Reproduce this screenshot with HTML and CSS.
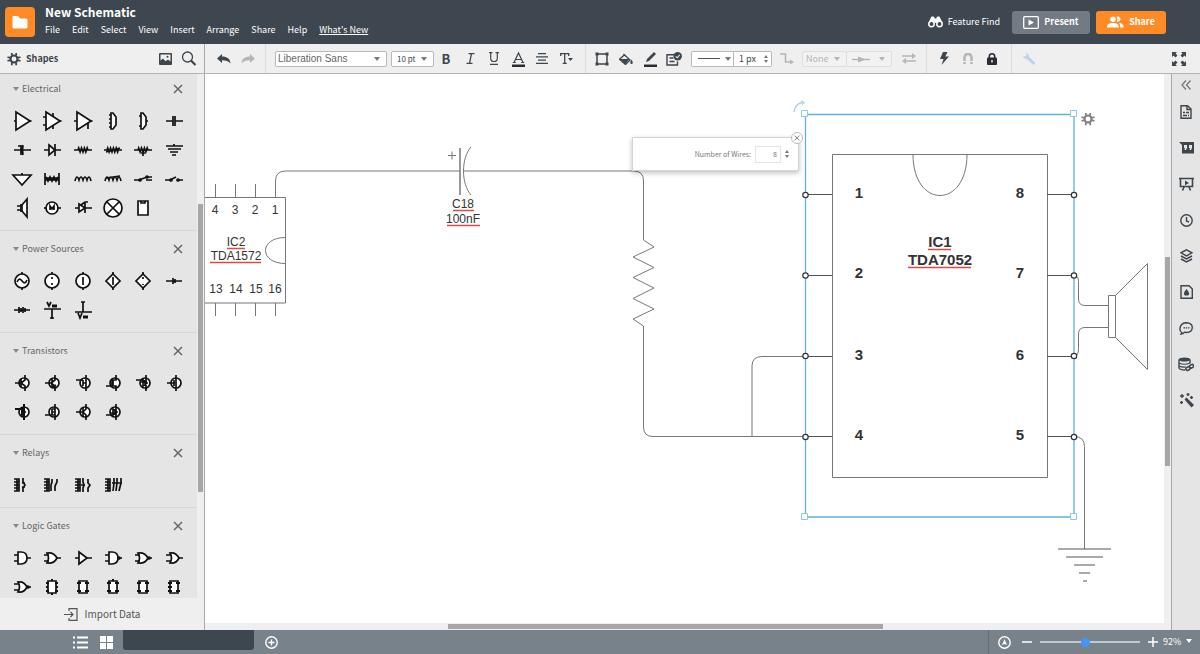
FILE: index.html
```html
<!DOCTYPE html>
<html lang="en">
<head>
    <meta charset="UTF-8">
    <meta name="viewport" content="width=device-width, initial-scale=1.0">
    <title>New Schematic</title>
    <link rel="stylesheet" href="styles.css">
</head>
<body>
    <!-- shared icons -->
    <svg class="defs" aria-hidden="true">
        <symbol id="gear" viewBox="-8 -8 16 16">
            <circle r="4" fill="none" stroke="currentColor" stroke-width="2.400"/>
            <path d="M-2.500-4V-7M2.500-4V-7M-2.500 4V7M2.500 4V7M-4-1.500-7.500-2M-4 1.500-7.500 2M4-1.500 7.500-2M4 1.500 7.500 2" fill="none" stroke="currentColor" stroke-width="2"/>
        </symbol>
        <symbol id="close" viewBox="0 0 10 10"><path d="M1 1l8 8M9 1L1 9" fill="none" stroke="currentColor" stroke-width="1.500"/></symbol>
    </svg>

    <header class="header">
        <button class="home-btn" aria-label="Documents">
            <svg width="16" height="13" viewBox="0 0 16 13"><path d="M1 0h5l2 2.500h6a1.500 1.500 0 0 1 1.500 1.500v7a1.500 1.500 0 0 1-1.500 1.500H2A1.500 1.500 0 0 1 .5 11V1z" fill="#fff"/></svg>
        </button>
        <div class="doc">
            <h1 class="doc-title">New Schematic</h1>
            <nav class="menu">
                <a href="#">File</a>
                <a href="#">Edit</a>
                <a href="#">Select</a>
                <a href="#">View</a>
                <a href="#">Insert</a>
                <a href="#">Arrange</a>
                <a href="#">Share</a>
                <a href="#">Help</a>
                <a href="#" class="whats-new">What's New</a>
            </nav>
        </div>
        <button class="find-btn">
            <svg width="15" height="12" viewBox="0 0 15 12"><path d="M3 1.500C3 .3 6 .3 6.500 1.500v1h2v-1C9 .3 12 .3 12 1.500l2.500 5.200H.5z" fill="#fff"/><g fill="#3e474f" stroke="#fff" stroke-width="1.500"><circle cx="3.500" cy="8" r="2.700"/><circle cx="11.500" cy="8" r="2.700"/></g></svg>
            Feature Find
        </button>
        <button class="top-btn present">
            <svg width="16" height="13" viewBox="0 0 16 13"><rect x=".7" y=".7" width="14.600" height="11.600" rx="1" fill="none" stroke="#fff" stroke-width="1.300"/><path d="M5.500 3.500l5.500 3-5.500 3z" fill="#fff"/></svg>
            Present
        </button>
        <button class="top-btn share">
            <svg width="17" height="12" viewBox="0 0 17 12" fill="#fff"><circle cx="6" cy="3.200" r="2.700"/><path d="M0 11.500C0 8 2.500 7 6 7s6 1 6 4.500zM9.500.9a2.600 2.600 0 1 1 0 4.500 4 4 0 0 0 0-4.500zM12 7.100c3 .2 4.600 1.500 4.600 4.400h-3.400c0-2-.3-3.400-1.200-4.400z"/></svg>
            Share
        </button>
    </header>

    <div class="toolbar">
        <div class="shapes-head">
            <button class="shapes-btn"><svg width="14" height="14"><use href="#gear"/></svg>Shapes</button>
            <button class="tool tool-image" aria-label="Images"><svg width="13" height="12" viewBox="0 0 13 12"><path d="M1 0h11q1 0 1 1v10q0 1-1 1H1q-1 0-1-1V1q0-1 1-1zM1.500 1.500v6L4 5.500l2.500 2.800L9 6.500l2.500 2v-7z" fill="currentColor" fill-rule="evenodd"/><circle cx="8.500" cy="3.700" r="1" fill="currentColor"/></svg></button>
            <button class="tool" aria-label="Search shapes"><svg width="16" height="15" viewBox="0 0 16 15" fill="none" stroke="currentColor"><circle cx="6.500" cy="6" r="5" stroke-width="1.300"/><path d="M10 9.500l4.500 4.500" stroke-width="2.200"/></svg></button>
        </div>
        <div class="group group-history">
            <button class="tool" aria-label="Undo"><svg width="14" height="10" viewBox="0 0 14 10"><path d="M5 0v2.500c5 0 8 2 8.500 7C11.500 7 9 6.300 5 6.300V9L0 4.500z" fill="currentColor"/></svg></button>
            <button class="tool off" aria-label="Redo" disabled><svg width="14" height="10" viewBox="0 0 14 10"><path d="M9 0v2.500c-5 0-8 2-8.500 7C2.500 7 5 6.300 9 6.300V9l5-4.500z" fill="currentColor"/></svg></button>
        </div>
        <div class="group group-text">
            <div class="field font-field"><select aria-label="Font"><option>Liberation Sans</option></select></div>
            <div class="field size-field"><select aria-label="Font size"><option>10 pt</option></select></div>
            <div class="tools">
                <button class="tool glyph bold" aria-label="Bold">B</button>
                <button class="tool" aria-label="Italic"><svg width="9" height="11" viewBox="0 0 9 11"><path d="M2.500.7h6M.5 10.300h6M5.500.7l-2 9.600" fill="none" stroke="currentColor" stroke-width="1.300"/></svg></button>
                <button class="tool" aria-label="Underline"><svg width="10" height="13" viewBox="0 0 10 13"><path d="M0 .7h3.500M6.500.7H10M1.700.7v5.500q0 3.300 3.300 3.300t3.300-3.300V.7M1 12.300h8" fill="none" stroke="currentColor" stroke-width="1.200"/></svg></button>
                <button class="tool" aria-label="Text color"><svg width="13" height="16" viewBox="0 0 13 16"><path d="M2 11.500L6.500 2 11 11.500M3.700 8.500h5.600M.8 11.500h3M9.200 11.500h3" fill="none" stroke="currentColor" stroke-width="1.200"/><path d="M0 13.500h13V16H0z" fill="#282c33"/></svg></button>
                <button class="tool" aria-label="Align text"><svg width="12" height="11" viewBox="0 0 12 11"><path d="M2 .7h8M0 3.900h12M2 7.100h8M0 10.300h12" stroke="currentColor" stroke-width="1.200"/></svg></button>
                <button class="tool" aria-label="Text options"><svg width="13" height="11" viewBox="0 0 13 11"><path d="M.7 3V.7h8V3M4.700.7v9.600M2.700 10.300h4" fill="none" stroke="currentColor" stroke-width="1.300"/><path d="M8 5h5l-2.500 3z" fill="currentColor"/></svg></button>
            </div>
        </div>
        <div class="group group-shape">
            <div class="tools">
                <button class="tool" aria-label="Shape"><svg width="14" height="14" viewBox="0 0 14 14"><path d="M2 2h10v10H2z" fill="none" stroke="currentColor" stroke-width="1.500"/><path d="M.5.5h3v3h-3zM10.500.5h3v3h-3zM.5 10.500h3v3h-3zM10.500 10.500h3v3h-3z" fill="currentColor"/></svg></button>
                <button class="tool" aria-label="Fill"><svg width="14" height="12" viewBox="0 0 14 12"><path d="M4.500 1l6.500 6-4.500 4.500L.5 6.200l4.500-4" fill="none" stroke="currentColor" stroke-width="1.300"/><path d="M1 6h9.500l-4 5z" fill="currentColor"/><path d="M12.500 6.500q2.500 4 0 4.500-2.500-.5 0-4.500z" fill="currentColor"/></svg></button>
                <button class="tool" aria-label="Line color"><svg width="13" height="16" viewBox="0 0 13 16"><path d="M2 11l1-3 7-7 2 2-7 7z" fill="currentColor"/><path d="M0 13.500h13V16H0z" fill="#282c33"/></svg></button>
                <button class="tool" aria-label="Theme"><svg width="16" height="14" viewBox="0 0 16 14"><path d="M9 2.700H1v10.300h10.500V9.500M3.500 6h4M3.500 9.500h5" fill="none" stroke="currentColor" stroke-width="1.400"/><circle cx="11.700" cy="4.300" r="4.200" fill="currentColor"/><path d="M9.700 4.300l1.500 1.500 2.500-3" fill="none" stroke="#efefef" stroke-width="1.100"/></svg></button>
            </div>
            <div class="field line-field"><select aria-label="Line style"><option></option></select></div>
            <div class="field px-field"><input type="text" value="1 px" aria-label="Line width"><span class="spin"></span></div>
            <button class="tool off elbow" aria-label="Line shape" disabled><svg width="14" height="12" viewBox="0 0 14 12"><path d="M0 1h5.500v8H11" fill="none" stroke="currentColor" stroke-width="1.500"/><path d="M10 6.500l4 2.500-4 2.500z" fill="currentColor"/></svg></button>
            <div class="field off none-field"><select aria-label="Line start" disabled><option>None</option></select></div>
            <div class="field off arrow-field"><select aria-label="Line end" disabled><option></option></select><svg width="18" height="7" viewBox="0 0 18 7"><path d="M0 3.500h18" stroke="currentColor" stroke-width="1.400"/><path d="M6 .5l8 3-8 3z" fill="currentColor"/></svg></div>
            <button class="tool off swap" aria-label="Swap ends" disabled><svg width="14" height="11" viewBox="0 0 14 11"><path d="M0 3h11M3 8h11" stroke="currentColor" stroke-width="1.400"/><path d="M10 0l4 3-4 3zM4 5v6L0 8z" fill="currentColor"/></svg></button>
        </div>
        <div class="group group-action">
            <button class="tool" aria-label="Actions"><svg width="10" height="13" viewBox="0 0 10 13"><path d="M4 0h4.500L6.300 4.500H10L2.500 13l2-6H1z" fill="currentColor"/></svg></button>
            <button class="tool off" aria-label="Snap" disabled><svg width="10" height="11" viewBox="0 0 10 11"><path d="M1.500 11V5q0-4 3.500-4t3.500 4v6" fill="none" stroke="currentColor" stroke-width="2.500"/><path d="M0 8.500h10" stroke="#efefef"/></svg></button>
            <button class="tool" aria-label="Lock"><svg width="10" height="12" viewBox="0 0 10 12"><path d="M2.300 5V3.500q0-2.700 2.700-2.700t2.700 2.700V5" fill="none" stroke="#282c33" stroke-width="1.600"/><rect y="4.500" width="10" height="7.500" rx="1" fill="#282c33"/><path d="M5 7v2.500" stroke="#efefef" stroke-width="1.400"/></svg></button>
        </div>
        <div class="group group-last">
            <button class="tool wrench" aria-label="Manage" disabled><svg width="14" height="14" viewBox="0 0 14 14"><path d="M3.500 1Q7 1.500 7 5l6.500 6-2 2L5 7Q1.500 7 1 3.500l2.500 1.300 1.200-1.200z" fill="currentColor"/></svg></button>
            <button class="tool fullscreen" aria-label="Full screen"><svg width="14" height="14" viewBox="0 0 14 14"><path d="M0 0h5L3.500 1.500l2 2-2 2-2-2L0 5zM14 0v5l-1.500-1.500-2 2-2-2 2-2L9 0zM0 14V9l1.500 1.500 2-2 2 2-2 2L5 14zM14 14H9l1.500-1.500-2-2 2-2 2 2L14 9z" fill="currentColor"/></svg></button>
        </div>
    </div>

    <div class="main">
        <aside class="sidebar">
            <div class="library">
                <div class="sections">
                    <section class="section">
                        <div class="section-head"><h2>Electrical</h2><button class="close" aria-label="Close Electrical"><svg width="10" height="10"><use href="#close"/></svg></button></div>
                        <div class="shapes">
                            <svg viewBox="-14 -14 28 28"><path class="w" d="M-6-9L8 0-6 9z"/><path d="M-8 0h2M8 0h1.500"/></svg>
                            <svg viewBox="-14 -14 28 28"><path class="w" d="M-6-9L8 0-6 9z"/><path d="M-9-4h3M-9 4h3M8 0h1.500M1-8v4M1 8V4"/></svg>
                            <svg viewBox="-14 -14 28 28"><path class="w" d="M-6-9L8 0-6 9z"/><path d="M-9 0h3M8 0h1.500M5 2v6"/></svg>
                            <svg viewBox="-14 -14 28 28"><path class="w" d="M-2-8h2l3 4v8L0 8h-2z"/><path d="M-4-6h2M-4-2h2M-4 2h2M-4 6h2"/></svg>
                            <svg viewBox="-14 -14 28 28"><path class="w" d="M-2-8h2l3 4v8L0 8h-2z"/><path d="M-4-5h2M-4 5h2M3 0h2"/></svg>
                            <svg viewBox="-14 -14 28 28"><path d="M-8 0h7M1 0h8M-1-5V5M1-5V5"/></svg>
                            <svg viewBox="-14 -14 28 28"><path d="M-8 0h7M1 0h8M-1-5V5M1-5q-1 5 0 10M-4-4h3"/></svg>
                            <svg viewBox="-14 -14 28 28"><path d="M-8 0H9M3-6V6"/><path class="w" d="M-3-5L3 0-3 5z"/></svg>
                            <svg viewBox="-14 -14 28 28"><path d="M-9 0h4l.7-2 1.400 4 1.400-4L0 2l1.400-4 1.400 4 1.400-4 .8 2h4"/></svg>
                            <svg viewBox="-14 -14 28 28"><path d="M-9 0h3l.7-2 1.400 4 1.400-4L-1 2 .4-2l1.400 4 1.400-4 1.400 4 .7-2H9M-7 2L7-2"/></svg>
                            <svg viewBox="-14 -14 28 28"><path d="M-9 0h4l.7-2 1.400 4 1.400-4L0 2l1.400-4 1.400 4 1.400-4 .8 2h4M0 1v5M-2 3h4"/></svg>
                            <svg viewBox="-14 -14 28 28"><path d="M-8-4H9M-6-1H7M-4 2h8M-2 5h4M0-6v2"/></svg>
                            <svg viewBox="-14 -14 28 28"><path class="w" d="M-9-4H9L0 6z"/><path d="M0-6v2"/></svg>
                            <svg viewBox="-14 -14 28 28"><path d="M-7-6V6M7-6V6M-7-1H7M-7 1H7M-6-2l2 4 2-4 2 4 2-4 2 4 2-4"/></svg>
                            <svg viewBox="-14 -14 28 28"><path d="M-8 2q1-4 2-4t2 3q1-3 2-3t2 3q1-3 2-3t2 3q1-3 2-3t2 4"/></svg>
                            <svg viewBox="-14 -14 28 28"><path d="M-8 2q1-4 2-4t2 3q1-3 2-3t2 3q1-3 2-3t2 3q1-3 2-3t2 4M-7-1L7-3"/></svg>
                            <svg viewBox="-14 -14 28 28"><path d="M-9 1h5l8-3h5M3 1h6"/><circle cx="-3" cy="1" r="1"/><circle cx="4" cy="-2" r="1"/></svg>
                            <svg viewBox="-14 -14 28 28"><path d="M-9 1h5l6-3M4 1h5"/><circle cx="-3" cy="1" r="1"/><circle cx="4" cy="1" r="1"/></svg>
                            <svg viewBox="-14 -14 28 28"><path class="w" d="M0-3l5-6V9L0 3z"/><path d="M-5-2h4M-5 2h4M-1-4V4"/></svg>
                            <svg viewBox="-14 -14 28 28"><path d="M-8 0H9"/><circle class="w" r="6"/><path d="M-2 2v-4l2 3 2-3v4"/></svg>
                            <svg viewBox="-14 -14 28 28"><path d="M-8 0H9M2-5V5M-2-3l4-3h3"/><path class="w" d="M-4-4L2 0-4 4z"/></svg>
                            <svg viewBox="-14 -14 28 28"><circle class="w" r="9"/><path d="M-6-6L6 6M6-6L-6 6"/></svg>
                            <svg viewBox="-14 -14 28 28"><path class="w" d="M-5-7H5V7H-5z"/><path d="M-2-7v2h4v-2"/></svg>
                        </div>
                    </section>
                    <section class="section">
                        <div class="section-head"><h2>Power Sources</h2><button class="close" aria-label="Close Power Sources"><svg width="10" height="10"><use href="#close"/></svg></button></div>
                        <div class="shapes">
                            <svg viewBox="-14 -14 28 28"><circle class="w" r="7"/><path d="M0-9v2M0 9V7M-5 1q2-5 5-1t5-1"/></svg>
                            <svg viewBox="-14 -14 28 28"><circle class="w" r="7"/><path d="M0-9v2M0 9V7M0-4v2M0 2v2"/></svg>
                            <svg viewBox="-14 -14 28 28"><circle class="w" r="7"/><path d="M0-9v2M0 9V7M0-4v8"/></svg>
                            <svg viewBox="-14 -14 28 28"><path class="w" d="M0-7l7 7-7 7-7-7z"/><path d="M0-9v2M0 9V7M0-4v8"/></svg>
                            <svg viewBox="-14 -14 28 28"><path class="w" d="M0-7l7 7-7 7-7-7z"/><path d="M0-9v2M0 9V7M0-4v2M0 3v1"/></svg>
                            <svg viewBox="-14 -14 28 28"><path d="M-8 0H8M-1-3v6M1-2v4"/></svg>
                            <svg viewBox="-14 -14 28 28"><path d="M-8 0H8M-3-3v6M-1-2v4M1-3v6M3-2v4"/></svg>
                            <svg viewBox="-14 -14 28 28"><path d="M-8-1H9M0-1v10M-2 8h4M-5-8l2 4 2-4"/><path d="M0-4h5" stroke-width="3"/></svg>
                            <svg viewBox="-14 -14 28 28"><path d="M-8 2H9M0-8V2M-2-8h4M-5 3l2 5 2-5"/><path d="M0 7h5" stroke-width="3"/></svg>
                        </div>
                    </section>
                    <section class="section">
                        <div class="section-head"><h2>Transistors</h2><button class="close" aria-label="Close Transistors"><svg width="10" height="10"><use href="#close"/></svg></button></div>
                        <div class="shapes">
                            <svg viewBox="-15 -14 28 28"><circle class="w" cx="1" r="5"/><path d="M2-8v5l-4 3 4 3v5M-8 0h6M-2-4v8"/></svg>
                            <svg viewBox="-15 -14 28 28"><circle class="w" cx="1" r="5"/><path d="M2-8v5l-4 3 4 3v5M-8 0h6M-1-4v8M0 4l3-2"/></svg>
                            <svg viewBox="-15 -14 28 28"><circle class="w" cx="1" r="5"/><path d="M2-8v16M-8-3h7M-1-3v6M-1 0h3"/></svg>
                            <svg viewBox="-15 -14 28 28"><circle class="w" cx="1" r="5"/><path d="M2-8v5h-4v6h4v5M-8 3h7M-1-3v6"/></svg>
                            <svg viewBox="-15 -14 28 28"><circle class="w" cx="1" r="5"/><path d="M2-8v16M-8-3h8M-1-3v6l4-3zM1-3v6M-3-1h6"/></svg>
                            <svg viewBox="-15 -14 28 28"><circle class="w" cx="1" r="5"/><path d="M1-8v16M-8 0h8M-1-3v6"/></svg>
                            <svg viewBox="-15 -14 28 28"><circle class="w" cx="1" r="5"/><path d="M1-8v16M-8-3h8M-1-3v6l3-3z" stroke-width="2"/></svg>
                            <svg viewBox="-15 -14 28 28"><circle class="w" cx="1" r="5"/><path d="M2-8v16M-8 3h8M-1-3v6h3M-1 0h3M-1-3h3"/></svg>
                            <svg viewBox="-15 -14 28 28"><circle class="w" cx="1" r="5"/><path d="M2-8v5l-3 3 3 3v5M-8 0h8M-1-4v8"/></svg>
                            <svg viewBox="-15 -14 28 28"><circle class="w" cx="1" r="5"/><path d="M2-8v16M-8 3h8M-1-3v6l4-3zM1-3v6M-3 1h6"/></svg>
                        </div>
                    </section>
                    <section class="section">
                        <div class="section-head"><h2>Relays</h2><button class="close" aria-label="Close Relays"><svg width="10" height="10"><use href="#close"/></svg></button></div>
                        <div class="shapes">
                            <svg viewBox="-14 -14 28 28"><path d="M-8-6h5v12h-5M-8-3h5M-8 0h5M-8 3h5M-5-6v12M1-7v4l2 3-2 3v4M0-2h3M0 2h3"/></svg>
                            <svg viewBox="-14 -14 28 28"><path d="M-8-6h5v12h-5M-8-3h5M-8 0h5M-8 3h5M-5-6v12M0-6v3l-1 3v6M5-6v3L3 1v5"/></svg>
                            <svg viewBox="-14 -14 28 28"><path d="M-8-6h5v12h-5M-8-3h5M-8 0h5M-8 3h5M-5-6v12M0-7v4l1 3-1 3v4M-2 0h4M5-6v4l2 2-2 3v4"/></svg>
                            <svg viewBox="-14 -14 28 28"><path d="M-8-6h5v12h-5M-8-3h5M-8 0h5M-8 3h5M-5-6v12M1-7v5L0 6M4-7v5L3 6M8-7v5L6 6M-1-2h10"/></svg>
                        </div>
                    </section>
                    <section class="section">
                        <div class="section-head"><h2>Logic Gates</h2><button class="close" aria-label="Close Logic Gates"><svg width="10" height="10"><use href="#close"/></svg></button></div>
                        <div class="shapes">
                            <svg viewBox="-14 -14 28 28"><path class="w" d="M-4-6h3q6 0 6 6t-6 6h-3z"/><path d="M-8-3h4M-8 3h4M5 0h4"/></svg>
                            <svg viewBox="-14 -14 28 28"><path class="w" d="M-5-5q7-1 10 5-3 6-10 5 3-5 0-10z"/><path d="M-8-3h5M-8 3h5M5 0h4"/></svg>
                            <svg viewBox="-14 -14 28 28"><path class="w" d="M-4-6L4 0l-8 6z"/><path d="M-8 0h4M4 0h5"/></svg>
                            <svg viewBox="-14 -14 28 28"><path class="w" d="M-4-6h3q6 0 6 6t-6 6h-3z"/><path d="M-8-3h4M-8 3h4M5 0h4"/><circle class="k" cx="6" r="1"/></svg>
                            <svg viewBox="-14 -14 28 28"><path class="w" d="M-5-5q7-1 10 5-3 6-10 5 3-5 0-10z"/><path d="M-8-3h5M-8 3h5M5 0h4"/><circle class="k" cx="6" r="1"/></svg>
                            <svg viewBox="-14 -14 28 28"><path class="w" d="M-4-5q6-1 9 5-3 6-9 5 3-5 0-10z"/><path d="M-8-3h5M-8 3h5M5 0h4"/></svg>
                            <svg viewBox="-14 -14 28 28"><path class="w" d="M-4-5q6-1 9 5-3 6-9 5 3-5 0-10z"/><path d="M-8-3h5M-8 3h5M5 0h4"/><circle class="k" cx="6" r="1"/></svg>
                            <svg viewBox="-14 -14 28 28"><path class="w" d="M-4-6h8V6h-8z"/><path d="M-6-4h3M-6 0h2M-6 4h3M6-4H3M6 0H4M6 4H3M0-8v2M0 8V6" stroke-width="2"/></svg>
                            <svg viewBox="-14 -14 28 28"><path class="w" d="M-4-6h8V6h-8z"/><path d="M-6-4h4M-6 4h4M6-4H2M6 4H2" stroke-width="2"/></svg>
                            <svg viewBox="-14 -14 28 28"><path class="w" d="M-4-6h8V6h-8z"/><path d="M-6-4h4M-6 4h4M6-4H2M6 4H2M0-8v2" stroke-width="2"/></svg>
                            <svg viewBox="-14 -14 28 28"><path class="w" d="M-4-6h8V6h-8z"/><path d="M-6-4h4M-6 4h4M6-4H2M6 4H2" stroke-width="2"/></svg>
                            <svg viewBox="-14 -14 28 28"><path class="w" d="M-4-6h8V6h-8z"/><path d="M-6-4h4M-6 0h4M-6 4h4M6-4H2M6 4H2" stroke-width="2"/></svg>
                        </div>
                    </section>
                </div>
                <div class="track track-v"><div class="thumb library-thumb"></div></div>
            </div>
            <button class="import-btn">
                <svg width="14" height="13" viewBox="0 0 14 13"><path d="M5 3V.7h8v11.600H5V10M0 6.500h9M6.500 4L9 6.500 6.500 9" fill="none" stroke="currentColor" stroke-width="1.200"/></svg>
                Import Data
            </button>
        </aside>

        <main class="workspace">
            <div class="canvas-row">
                <div class="canvas">
                    <svg class="schematic" width="958" height="549" viewBox="205 74 958 549">
                        <!-- wires -->
                        <g class="wire">
                            <path d="M275.500 197V181q0-10 10-10H459.500M463 171H634q9.500 0 9.500 10V240l10.500 7-21 10 21 10.500-21 10 21 10.500-21 10.500 21 10.500-21 10 10.500 7V427q0 9.500 9.500 9.500H832"/>
                            <path d="M752 436.500V366q0-9.500 10-9.500h43"/>
                            <path d="M1074 275.500q4.500 0 4.500 6V299q0 6.500 6.500 6.500h23.500M1074 356.500q4.500 0 4.500-8V334q0-6.500 6.500-6.500h23.500"/>
                            <path d="M1074 436.500q10.500 0 10.500 10V549"/>
                        </g>
                        <!-- IC2 -->
                        <g class="part">
                            <path d="M204.500 197.500h81v105.500h-81z"/>
                            <path d="M285.500 237.500C272 237.500 265.500 244 265.500 250.500S272 263.500 285.500 263.500"/>
                            <path d="M215.500 184v13M235.500 184v13M255.500 184v13M215.500 303v13M235.500 303v13M255.500 303v13M275.500 303v13"/>
                        </g>
                        <g class="label">
                            <text x="215" y="214">4</text><text x="235" y="214">3</text><text x="255" y="214">2</text><text x="275" y="214">1</text>
                            <text x="216" y="293">13</text><text x="236" y="293">14</text><text x="256" y="293">15</text><text x="275" y="293">16</text>
                            <text x="236" y="246">IC2</text><text x="236" y="260">TDA1572</text>
                            <text x="463" y="208">C18</text><text x="463" y="223">100nF</text>
                        </g>
                        <!-- capacitor -->
                        <path class="dark" d="M460 148v47"/>
                        <path class="part" d="M471 147C461 158 461 184 471 195M448 155.500h8M452 151.500v8"/>
                        <!-- IC1 -->
                        <g class="part">
                            <path d="M832.500 154.500h215v323h-215z"/>
                            <path d="M913 154.500C913 181 926 195.500 940 195.500S967 181 967 154.500"/>
                        </g>
                        <path class="dark" d="M805 194.500h27M805 275.500h27M805 356.500h27M805 436.500h27M1047 194.500h27M1047 275.500h27M1047 356.500h27M1047 436.500h27"/>
                        <g class="label label-bold">
                            <text x="859" y="198">1</text><text x="859" y="278">2</text><text x="859" y="360">3</text><text x="859" y="440">4</text>
                            <text x="1020" y="198">8</text><text x="1020" y="278">7</text><text x="1020" y="360">6</text><text x="1020" y="440">5</text>
                            <text x="940" y="247">IC1</text><text x="940" y="265">TDA7052</text>
                        </g>
                        <path class="spell" d="M227 248.500h18M210 262.500h51M453 210.500h21M447 225.500h33M928 249.500h23M908 267.500h63"/>
                        <!-- speaker and ground -->
                        <path class="part" d="M1108.500 295.500h7v42h-7zM1115.500 295.500l32-32v106l-32-32"/>
                        <path class="dark" d="M1058 549h53M1066 557h37M1074 565h21M1079 573h11M1083 581h4"/>
                        <!-- selection -->
                        <path class="select-box" d="M805.500 114.500h268.500v402.500h-268.500z"/>
                        <g class="handle">
                            <path d="M801.500 110.500h6v6h-6zM1070.500 110.500h6v6h-6zM801.500 513.500h6v6h-6zM1070.500 513.500h6v6h-6z"/>
                        </g>
                        <path class="rotate" d="M794 112q1-8 8-9.500M801 101l3 1.500-2 2"/>
                        <g class="node">
                            <circle cx="805.500" cy="195" r="2.700"/><circle cx="805.500" cy="275.500" r="2.700"/><circle cx="805.500" cy="356" r="2.700"/><circle cx="805.500" cy="437" r="2.700"/>
                            <circle cx="1074" cy="195" r="2.700"/><circle cx="1074" cy="275.500" r="2.700"/><circle cx="1074" cy="356" r="2.700"/><circle cx="1074" cy="437" r="2.700"/>
                        </g>
                        <use class="shape-gear" href="#gear" x="1081" y="112" width="14" height="14"/>
                    </svg>
                    <div class="popup">
                        <label for="wires">Number of Wires:</label>
                        <input id="wires" type="text" value="8">
                        <span class="spin"></span>
                        <button class="popup-close" aria-label="Close"><svg width="6" height="6"><use href="#close"/></svg></button>
                    </div>
                </div>
                <div class="track track-v"><div class="thumb canvas-thumb-v"></div></div>
            </div>
            <div class="track track-h"><div class="thumb canvas-thumb-h"></div></div>
        </main>

        <aside class="dock">
            <button aria-label="Collapse"><svg width="10" height="10" viewBox="0 0 10 10"><path d="M5 .5L1 5l4 4.500M9.500.5L5.500 5l4 4.500" fill="none" stroke="currentColor" stroke-width="1.300"/></svg></button>
            <button aria-label="Page settings"><svg width="12" height="14" viewBox="0 0 12 14"><path d="M1 .7h6.500L11 4v9.300H1z" fill="none" stroke="currentColor" stroke-width="1.400"/><path d="M7 .5v4h4M3 7.500h2M6 7.500h3M3 10.500h4M8 10.500h1" fill="none" stroke="currentColor" stroke-width="1.400"/></svg></button>
            <button aria-label="Notes"><svg width="15" height="12" viewBox="0 0 15 12"><path d="M0 0h15v11.500H3V3z" fill="currentColor"/><path d="M5 3h3v3L7 8H5.500L6 6H5zM10 3h3v3l-1 2h-1.500l.5-2h-1z" fill="#e5e5e5"/></svg></button>
            <button aria-label="Presentation"><svg width="15" height="14" viewBox="0 0 15 14"><path d="M0 1.500h15M1.500 2v7.500h12V2M5 10l-1.500 3.500M10 10l1.500 3.500" fill="none" stroke="currentColor" stroke-width="1.600"/><path d="M6 3.500L10 6 6 8.300z" fill="currentColor"/></svg></button>
            <button aria-label="History"><svg width="13" height="13" viewBox="0 0 13 13"><circle cx="6.500" cy="6.500" r="5.700" fill="none" stroke="currentColor" stroke-width="1.400"/><path d="M6.500 3v4l2.500 1" fill="none" stroke="currentColor" stroke-width="1.400"/></svg></button>
            <button aria-label="Layers"><svg width="13" height="14" viewBox="0 0 13 14"><path d="M6.500.8l5.500 3-5.500 3-5.500-3zM1 7l5.500 3L12 7M1 10l5.500 3 5.500-3" fill="none" stroke="currentColor" stroke-width="1.500"/></svg></button>
            <button aria-label="Theme"><svg width="13" height="14" viewBox="0 0 13 14"><path d="M1 .7h8L12.300 4v9.300H1z" fill="none" stroke="currentColor" stroke-width="1.400"/><path d="M6.500 4Q11 9 8 10.500H5Q2 9 6.500 4z" fill="currentColor"/></svg></button>
            <button aria-label="Comments"><svg width="14" height="13" viewBox="0 0 14 13"><path d="M3 11q-2.500-2-2-5Q2 .8 7.500.8 13 1 13.300 5.500 13 10.500 7.500 10.500q-1 0-2-.3Q4 12 2 12z" fill="none" stroke="currentColor" stroke-width="1.400"/><path d="M4.500 5.800h1.500M6.700 5.800h1.500M9 5.800h1.500" stroke="currentColor" stroke-width="1.300"/></svg></button>
            <button aria-label="Linked data"><svg width="16" height="15" viewBox="0 0 16 15"><path d="M1 2.500v8.500q1 2 6 2M12 2.500v4" fill="none" stroke="currentColor" stroke-width="1.400"/><ellipse cx="6.500" cy="2.500" rx="5.800" ry="2" fill="currentColor"/><path d="M1 6q5 2.500 11 0M1 9q3 1.500 7 1" fill="none" stroke="currentColor" stroke-width="1.200"/><g fill="none" stroke="currentColor" stroke-width="1.500"><rect x="7.500" y="10" width="4.500" height="3" rx="1.500" transform="rotate(-30 10 11)"/><rect x="11" y="8" width="4.500" height="3" rx="1.500" transform="rotate(-30 13 9)"/></g></svg></button>
            <button aria-label="Magic format"><svg width="15" height="15" viewBox="0 0 15 15"><path d="M5.500 6.500l2-2 7.500 7.500-2.500 2.500z" fill="currentColor"/><path d="M3 1v4M1 3h4M9 0v3M7.500 1.500h3M12.500 3v3M11 4.500h3M2.500 8v3M1 9.500h3" stroke="currentColor" stroke-width="1.300"/></svg></button>
        </aside>
    </div>

    <footer class="footer">
        <button aria-label="Page list"><svg width="15" height="13" viewBox="0 0 15 13"><path d="M0 1.500h2M4 1.500h11M0 6.500h2M4 6.500h11M0 11.500h2M4 11.500h11" stroke="#fff" stroke-width="2"/></svg></button>
        <button aria-label="Page grid"><svg width="13" height="13" viewBox="0 0 13 13"><path d="M0 0h6v6H0zM7 0h6v6H7zM0 7h6v6H0zM7 7h6v6H7z" fill="#fff"/></svg></button>
        <button class="page-tab" aria-label="Current page"></button>
        <button aria-label="Add page"><svg width="13" height="13" viewBox="0 0 13 13"><circle cx="6.500" cy="6.500" r="5.700" fill="none" stroke="#fff" stroke-width="1.400"/><path d="M6.500 3.500v6M3.500 6.500h6" stroke="#fff" stroke-width="1.400"/></svg></button>
        <div class="zoom">
            <button aria-label="Center view"><svg width="13" height="13" viewBox="0 0 13 13"><circle cx="6.500" cy="6.500" r="5.700" fill="none" stroke="#fff" stroke-width="1.400"/><path d="M6.500 3L9 9 6.500 8 4 9z" fill="#fff"/></svg></button>
            <button class="zoom-out" aria-label="Zoom out"><svg width="10" height="10" viewBox="0 0 10 10"><path d="M0 5h10" stroke="#fff" stroke-width="1.500"/></svg></button>
            <input type="range" min="0" max="100" value="45" aria-label="Zoom">
            <button class="zoom-in" aria-label="Zoom in"><svg width="10" height="10" viewBox="0 0 10 10"><path d="M0 5h10M5 0v10" stroke="#fff" stroke-width="1.500"/></svg></button>
            <div class="field zoom-field"><select aria-label="Zoom level"><option>92%</option></select></div>
        </div>
    </footer>
</body>
</html>
```

FILE: styles.css
```css
:root {
    --header-bg: #3e474f;
    --bar-bg: #efefef;
    --panel-bg: #e5e5e5;
    --footer-bg: #78828a;
    --icon: #3d454d;
    --orange: #ff8b26;
    --ui-font: "Noto Sans CJK SC", "Open Sans", sans-serif;
}

* {
    box-sizing: border-box;
}

body {
    margin: 0;
    height: 100vh;
    display: flex;
    flex-direction: column;
    overflow: hidden;
    font-family: var(--ui-font);
    font-size: 9px;
    line-height: 14px;
    color: var(--icon);
    background: #fff;
}

button,
input,
select {
    font: inherit;
    color: inherit;
    margin: 0;
    padding: 0;
    border: 0;
    background: none;
    outline: none;
}

button {
    display: flex;
    align-items: center;
    justify-content: center;
    flex: none;
}

svg {
    display: block;
    flex: none;
}

.defs {
    position: absolute;
    width: 0;
    height: 0;
}

/* header */
.header {
    flex: none;
    height: 44px;
    padding: 0 34px 0 5px;
    display: flex;
    align-items: center;
    background: var(--header-bg);
    color: #fff;
}

.home-btn {
    width: 30px;
    height: 30px;
    border-radius: 4px;
    background: var(--orange);
}

.doc {
    flex: 1;
    margin-left: 10px;
    padding-bottom: 4px;
}

.doc-title {
    margin: 0 0 2px;
    font-size: 12px;
    line-height: 18px;
    font-weight: 700;
}

.menu {
    display: flex;
    gap: 12px;
}

.menu a {
    color: #fff;
    text-decoration: none;
}

.menu .whats-new {
    text-decoration: underline;
}

.find-btn {
    gap: 5px;
    margin-right: 12px;
}

.top-btn {
    height: 23px;
    gap: 5px;
    border-radius: 3px;
    font-weight: 700;
}

.present {
    width: 78px;
    margin-right: 6px;
    background: #727b83;
}

.share {
    width: 70px;
    background: var(--orange);
}

/* toolbar */
.toolbar {
    flex: none;
    height: 30px;
    display: flex;
    background: var(--bar-bg);
    border-bottom: 1px solid #b4b4b4;
}

.shapes-head {
    width: 205px;
    padding: 0 3px 0 7px;
    display: flex;
    align-items: center;
    border-right: 1px solid #a8a8a8;
}

.shapes-btn {
    gap: 5px;
    margin-right: auto;
    font-weight: 700;
}

.group {
    display: flex;
    align-items: center;
    border-right: 1px solid #dcdcdc;
}

.group-history {
    width: 61px;
    padding-left: 7px;
}

.group-text {
    width: 320px;
    padding-left: 9px;
}

.group-shape {
    width: 341px;
    padding-left: 4px;
}

.group-action {
    width: 85px;
    padding-left: 5px;
}

.group-last {
    flex: 1;
    padding: 0 9px 0 5px;
    border-right: 0;
}

.tools {
    display: flex;
}

.tool {
    width: 24px;
    height: 24px;
}

.glyph {
    font-size: 13px;
    line-height: 16px;
}

.bold {
    font-weight: 700;
}

.off {
    color: #b5b5b5;
}

.wrench {
    color: #b9d3ee;
}

.fullscreen {
    margin-left: auto;
}

.field {
    position: relative;
    display: flex;
    align-items: center;
    height: 16px;
    background: #fff;
    border: 1px solid #b8b8b8;
    border-radius: 2px;
}

.field select,
.field input {
    appearance: none;
    width: 100%;
    height: 14px;
    padding-left: 5px;
    line-height: 14px;
    opacity: 1;
}

.field:not(.px-field)::after {
    content: "";
    position: absolute;
    right: 6px;
    top: 5px;
    border: 3px solid transparent;
    border-top: 4px solid #777;
    border-bottom: 0;
    pointer-events: none;
}

.font-field {
    width: 112px;
    margin-right: 4px;
}

.font-field select {
    padding-left: 2px;
    font-family: "Liberation Sans", Arial, sans-serif;
    font-size: 10px;
    color: #666;
}

.size-field {
    width: 43px;
}

.size-field select {
    font-size: 8px;
}

.line-field {
    width: 43px;
    margin-left: 5px;
    border-radius: 2px 0 0 2px;
}

.line-field select {
    background: linear-gradient(#555, #555) 6px center / 22px 1px no-repeat;
}

.line-field:not(.px-field)::after {
    right: 2px;
}

.px-field {
    width: 38px;
    border-left: 0;
    border-radius: 0 2px 2px 0;
}

.spin {
    position: relative;
    flex: none;
    width: 4px;
    height: 8px;
    margin-right: 3px;
}

.spin::before,
.spin::after {
    content: "";
    position: absolute;
    left: 0;
    border: 2px solid transparent;
}

.spin::before {
    top: 0;
    border-top: 0;
    border-bottom: 3px solid #777;
}

.spin::after {
    bottom: 0;
    border-bottom: 0;
    border-top: 3px solid #777;
}

.elbow {
    margin: 0 3px;
}

.field.off {
    border-color: #dedede;
    background: #f2f2f2;
}

.field.off::after {
    border-top-color: #b5b5b5;
}

.none-field {
    width: 45px;
}

.none-field select {
    padding-left: 3px;
}

.arrow-field {
    width: 45px;
    border-left: 0;
}

.arrow-field svg {
    position: absolute;
    left: 5px;
    top: 4px;
    pointer-events: none;
}

.swap {
    margin-left: 5px;
}

/* shape library */
.main {
    flex: 1;
    min-height: 0;
    display: flex;
}

.sidebar {
    flex: none;
    width: 205px;
    display: flex;
    flex-direction: column;
    border-right: 1px solid #a8a8a8;
}

.library {
    flex: 1;
    min-height: 0;
    display: flex;
    background: var(--panel-bg);
}

.sections {
    flex: 1;
    overflow: hidden;
}

.section {
    padding: 8px 8px 8px 7px;
    border-top: 1px solid #d6d6d6;
}

.section:first-child {
    padding-top: 5px;
    border-top: 0;
}

.section-head {
    display: flex;
    align-items: center;
    justify-content: space-between;
    height: 20px;
    margin-bottom: 7px;
    padding: 0 6px 0 6px;
    color: #666;
}

.section-head h2 {
    display: flex;
    align-items: center;
    gap: 3px;
    margin: 0;
    font-size: 9px;
    font-weight: 400;
}

.section-head h2::before {
    content: "";
    border: 3px solid transparent;
    border-top: 4px solid #888;
    border-bottom: 0;
}

.shapes {
    display: grid;
    grid-template-columns: repeat(6, 1fr);
    grid-auto-rows: 29px;
    place-items: center;
}

.shapes svg {
    width: 28px;
    height: 28px;
    fill: none;
    stroke: #111;
    stroke-width: 1.7;
}

.shapes .w {
    fill: #fff;
}

.shapes .k {
    fill: #111;
}

.import-btn {
    height: 32px;
    gap: 7px;
    background: var(--bar-bg);
    font-size: 10px;
    color: #555;
}

/* scrollbars */
.track {
    flex: none;
    background: #eeeff0;
}

.track-v {
    width: 7px;
    padding: 0 1px;
}

.track-h {
    height: 7px;
    padding: 1px 0;
}

.thumb {
    background: #a6a6a6;
}

.library-thumb {
    height: 55%;
    margin-top: 130px;
}

.canvas-thumb-v {
    height: 38%;
    margin-top: 183px;
}

.canvas-thumb-h {
    width: 45%;
    height: 5px;
    margin-left: 243px;
}

/* canvas */
.workspace {
    flex: 1;
    min-width: 0;
    display: flex;
    flex-direction: column;
}

.canvas-row {
    flex: 1;
    min-height: 0;
    display: flex;
}

.canvas {
    position: relative;
    flex: 1;
    min-width: 0;
    overflow: hidden;
    background: #fff;
}

.wire,
.part {
    fill: none;
    stroke: #777;
}

.dark {
    fill: none;
    stroke: #555;
    stroke-width: 1.2;
}

.label {
    font-family: "Liberation Sans", Arial, sans-serif;
    font-size: 12px;
    fill: #333;
    text-anchor: middle;
}

.label-bold {
    font-size: 15px;
    font-weight: 700;
}

.spell {
    stroke: #e04a46;
    stroke-width: 1.3;
}

.select-box {
    fill: none;
    stroke: #5cb3dc;
    stroke-width: 1.3;
}

.handle {
    fill: #fff;
    stroke: #8cc9e8;
}

.rotate {
    fill: none;
    stroke: #a9cfe6;
    stroke-width: 1.3;
}

.node {
    fill: #fff;
    stroke: #333;
    stroke-width: 1.2;
}

.shape-gear {
    color: #808080;
}

.popup {
    position: absolute;
    left: 427px;
    top: 63px;
    width: 167px;
    height: 34px;
    display: flex;
    align-items: center;
    justify-content: flex-end;
    gap: 4px;
    padding-right: 6px;
    background: #fff;
    border: 1px solid #d4d4d4;
    box-shadow: 0 2px 5px rgba(0, 0, 0, 0.25);
    font-size: 7px;
    line-height: 10px;
    color: #777;
}

.popup input {
    width: 26px;
    height: 17px;
    padding-right: 3px;
    border: 1px solid #e4e4e4;
    text-align: right;
}

.popup-close {
    position: absolute;
    right: -5px;
    top: -6px;
    width: 12px;
    height: 12px;
    background: #fff;
    border: 1px solid #bbb;
    border-radius: 50%;
}

/* right dock */
.dock {
    flex: none;
    width: 29px;
    padding-top: 2px;
    border-left: 1px solid #a8a8a8;
    background: var(--panel-bg);
}

.dock button {
    width: 28px;
    height: 36px;
}

.dock button:first-child {
    height: 18px;
    color: #777;
}

/* footer */
.footer {
    flex: none;
    height: 24px;
    display: flex;
    align-items: center;
    padding-left: 67px;
    background: var(--footer-bg);
    color: #fff;
}

.footer button {
    width: 26px;
    height: 24px;
}

.footer .page-tab {
    width: 131px;
    height: 20px;
    margin: 0 4px;
    align-self: flex-start;
    background: var(--header-bg);
    border-radius: 0 0 3px 3px;
}

.zoom {
    margin-left: auto;
    display: flex;
    align-items: center;
    border-left: 1px solid #626b73;
    padding: 0 6px 0 2px;
}

.footer .zoom-out,
.footer .zoom-in {
    width: 20px;
}

.zoom input {
    appearance: none;
    width: 100px;
    height: 2px;
    margin: 0 3px;
    background: #c3c8cc;
}

.zoom input::-webkit-slider-thumb {
    appearance: none;
    width: 9px;
    height: 9px;
    border-radius: 50%;
    background: #3f97f6;
}

.zoom-field {
    width: 31px;
    background: none;
    border: 0;
}

.zoom-field select {
    padding-left: 0;
}

.footer .zoom-field::after {
    right: 2px;
    border-top-color: #fff;
}
```
